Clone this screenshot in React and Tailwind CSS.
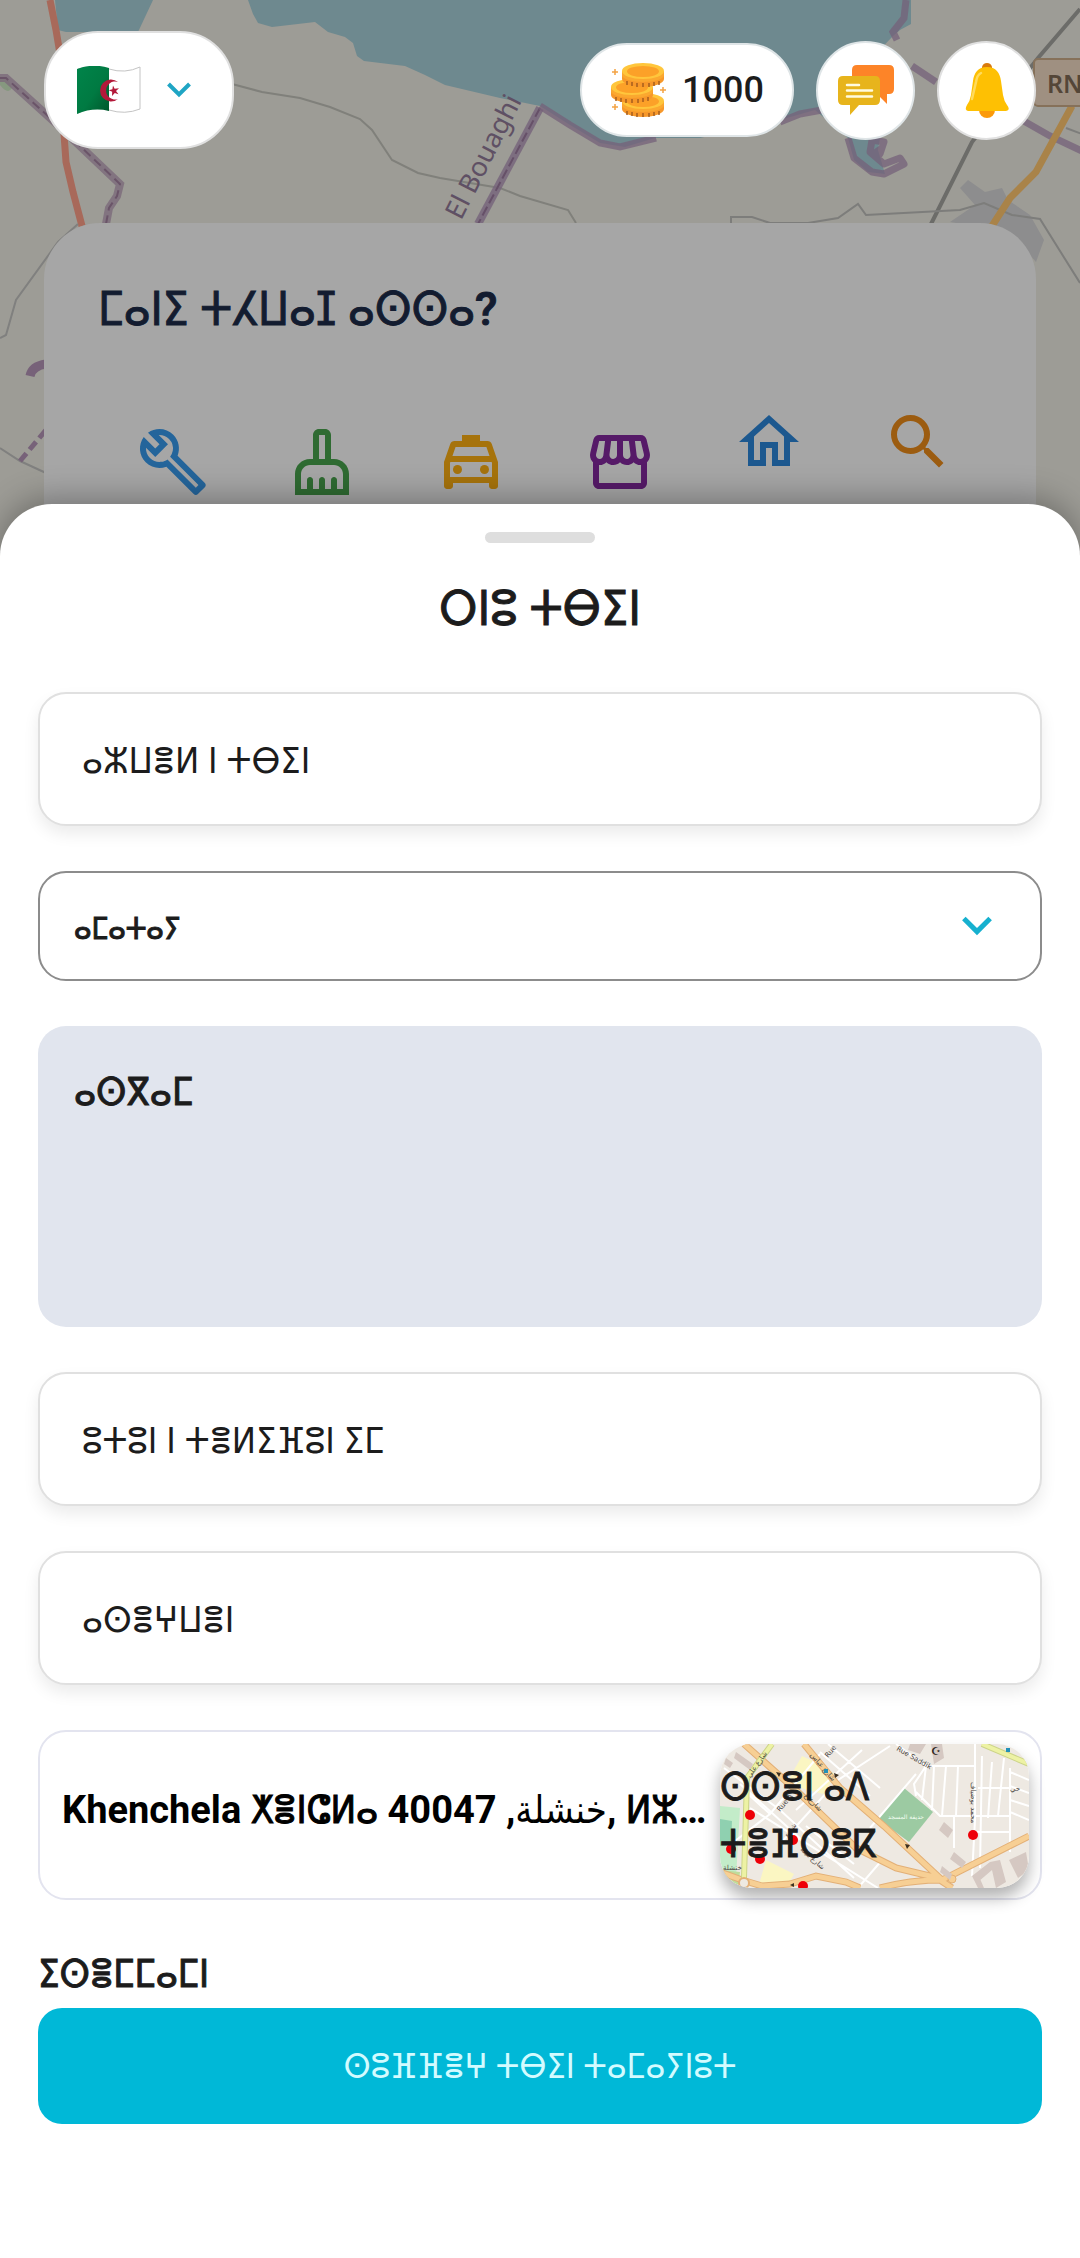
import React from "react";
import {
  MdOutlineBuild,
  MdOutlineCleaningServices,
  MdOutlineLocalTaxi,
  MdOutlineStorefront,
  MdOutlineHome,
  MdSearch,
} from "react-icons/md";

function BackgroundMap() {
  return (
    <svg
      className="absolute inset-0 h-full w-full"
      viewBox="0 0 1080 560"
      preserveAspectRatio="xMidYMin slice"
      fill="none"
      aria-hidden="true"
    >
      <rect width="1080" height="560" fill="#9d9c96" />
      <path d="M55 0H153L138 32H66L58 30Z" fill="#6e898f" />
      <path
        d="M248 0L253 14 258 23 272 27 315 22 328 32 345 37 353 43 357 56 364 61 405 66 425 75 445 85 500 98 540 106 570 125 600 143 625 147 655 138 700 138 780 120 815 110 848 138 854 160 868 172 885 174 878 150 880 138 870 60 893 36 900 30 911 24 911 0Z"
        fill="#6e898f"
      />
      <path d="M0 85Q8 95 12 88L8 79 0 78Z" fill="#86987f" />
      <path d="M50 0L56 30 61 60 63 120 66 162 73 192 82 226" stroke="#a8695a" strokeWidth="7" />
      <path d="M0 78H6L60 127 120 184 117 196 109 208 106 224" stroke="#7c6a7b" strokeWidth="8" opacity=".8" />
      <path d="M0 78H6L60 127 120 184 117 196 109 208 106 224" stroke="#6a5468" strokeWidth="2" strokeDasharray="9 5" />
      <path d="M232 84L262 92 300 98 330 107 360 119 372 130 392 160 418 173 440 178 500 188 520 196 568 210 576 223" stroke="#80807b" strokeWidth="2" />
      <path d="M540 108L478 224" stroke="#76637a" strokeWidth="8" opacity=".8" />
      <path d="M540 108L478 224" stroke="#665068" strokeWidth="2" strokeDasharray="10 4" />
      <text
        transform="translate(461 221) rotate(-63)"
        fontSize="27"
        fill="#5f5064"
        className="font-['Noto_Sans']"
      >
        El Bouaghi
      </text>
      <path d="M540 106L570 125 600 143 620 147 656 138M780 122L800 114 822 110M906 0L904 18 893 32 897 40M912 66L936 82M1022 120L1050 136 1082 151" stroke="#766179" strokeWidth="7" opacity=".75" />
      <path d="M848 138L854 158 872 172 884 174 904 164 900 158 884 164 870 152 872 140 884 142 880 154 876 148" stroke="#766179" strokeWidth="7" opacity=".75" strokeLinejoin="round" />
      <path d="M1080 9L1038 58 972 142 931 224" stroke="#6c6c69" strokeWidth="4" />
      <path d="M960 188L968 180 985 192 1002 188 1008 200 1030 215 1044 240 1036 262 1010 232 950 222 975 205Z" fill="#8d8d8e" />
      <path d="M731 224V217H752L770 223H808L838 218 858 204 866 215 960 210 984 203 1012 215 1040 219 1080 283" stroke="#7d7d7b" strokeWidth="2" />
      <path d="M1066 128L1082 134" stroke="#7d7d7b" strokeWidth="2" />
      <path d="M1072 106L1036 172 1010 198 992 226" stroke="#a98349" strokeWidth="7" />
      <rect x="1034" y="59" width="60" height="47" rx="4" fill="#9f9081" stroke="#86715a" strokeWidth="2" />
      <text x="1047" y="93" fontSize="25" fill="#544638" className="font-['Noto_Sans'] font-semibold">
        RN
      </text>
      <path d="M78 224L58 242 16 300 6 335 0 338M0 448L20 461 46 473" stroke="#80807f" strokeWidth="2" />
      <path d="M30 376Q32 366 46 364" stroke="#776279" strokeWidth="9" />
      <path d="M20 461L46 430" stroke="#776279" strokeWidth="5" strokeDasharray="10 5" />
    </svg>
  );
}

function FlagIcon() {
  return (
    <svg className="h-12 w-16" viewBox="0 0 64 48" aria-hidden="true">
      <defs>
        <linearGradient id="flagGreen" x1="0" y1="0" x2="1" y2="1">
          <stop offset="0" stopColor="#00844a" />
          <stop offset=".55" stopColor="#007a42" />
          <stop offset="1" stopColor="#00562b" />
        </linearGradient>
      </defs>
      <path d="M1 3Q16-2 32 3T63 1V43Q48 49 32 44T1 47Z" fill="#fff" stroke="#c4c4c4" />
      <path d="M0 3Q16-3 32 2V45Q16 41 0 48Z" fill="url(#flagGreen)" />
      <path d="M41 16A11 11 0 1 0 41 33 9 9 0 1 1 41 16Z" fill="#b3193a" />
      <path d="M36 19.500l1.600 3.200 4.400-.4-3 2.700 2.500 3.200-3.700-1.200-2.800 3 .2-4.200-3.500-1.600 3.700-.9Z" fill="#b3193a" />
    </svg>
  );
}

function ChevronIcon({ className }) {
  return (
    <svg className={className} viewBox="0 0 24 24" fill="none" aria-hidden="true">
      <path d="M1.500 6L12 16.500 22.500 6" stroke="currentColor" strokeWidth="4" />
    </svg>
  );
}

function Coin({ x, y }) {
  return (
    <g transform={`translate(${x} ${y})`}>
      <path d="M0 8V16C0 20 9 24 21 24S42 20 42 16V8Z" fill="#f7982a" />
      <path d="M5 18v4M10 19v4M15 20v4M21 20v4M27 20v4M32 19v4M37 18v4" stroke="#a75d1c" strokeWidth="1.500" />
      <path d="M0 8V12C0 16 9 19 21 19S42 16 42 12V8Z" fill="#fba82f" />
      <ellipse cx="21" cy="8" rx="21" ry="8" fill="#ffc63c" />
      <ellipse cx="21" cy="8.500" rx="16" ry="5.500" fill="#fca128" />
    </g>
  );
}

function CoinsIcon() {
  return (
    <svg className="h-14 w-14" viewBox="0 0 56 56" aria-hidden="true">
      <Coin x={12} y={31} />
      <Coin x={1} y={17} />
      <Coin x={12} y={1} />
      <path d="M5 7v6M2 10h6M53 25v6M50 28h6M5 42v6M2 45h6" stroke="#f4a343" strokeWidth="1.500" />
    </svg>
  );
}

function ChatIcon() {
  return (
    <svg className="h-14 w-14" viewBox="0 0 56 56" aria-hidden="true">
      <path d="M19 3H51Q56 3 56 8V27Q56 32 51 32H49V42L41 34 19 32Q14 32 14 27V8Q14 3 19 3Z" fill="#fd8428" />
      <path d="M5 14H37Q42 14 42 19V38Q42 43 37 43H21L12 53V43H5Q0 43 0 38V19Q0 14 5 14Z" fill="#e7b41c" />
      <path d="M9 23H21M9 28.500H34M9 34.500H34" stroke="#fffbe0" strokeWidth="2.500" strokeLinecap="round" />
    </svg>
  );
}

function BellIcon() {
  return (
    <svg className="h-14 w-12" viewBox="0 0 48 56" aria-hidden="true">
      <path d="M19 8V5Q20 1 24 1T29 5V8Z" fill="#d97b0c" />
      <circle cx="24" cy="48" r="8" fill="#fb9a0b" />
      <path d="M24 5C15 5 11 11 10 19L8 33Q7 39 4 43Q1 48 5 49H43Q48 48 44 43Q41 39 40 33L38 19C37 11 33 5 24 5Z" fill="#fec003" />
      <path d="M9 37L13 20Q14 13 18 11" stroke="#ffdb5c" strokeWidth="2.500" fill="none" strokeLinecap="round" />
    </svg>
  );
}

function StreetMap() {
  return (
    <svg
      className="absolute inset-0 h-full w-full"
      viewBox="0 0 309 144"
      preserveAspectRatio="xMidYMid slice"
      fill="none"
      aria-hidden="true"
    >
      <rect width="309" height="144" fill="#eee9e2" />
      <path d="M0 62L20 64 16 134H0Z" fill="#c3ecc9" />
      <path d="M0 75L12 77 11 102H0Z" fill="#8fd0b0" />
      <path d="M0 126L20 128 18 144H0Z" fill="#bfdc9a" />
      <path d="M82 12L104 22 116 31 103 50 66 40Z" fill="#fbf6c2" />
      <path d="M46 116L74 130 66 144H38Z" fill="#fbf6c2" />
      <path d="M184 44L213 68 189 98 158 75Z" fill="#9ccaa2" />
      <g stroke="#fff" strokeWidth="2">
        <path d="M4 24L60 66 134 134M28 50L50 70 100 10M50 70L6 104M60 100L118 36 170 2M76 66L142 6M100 8L150 52M108 0L160 44M20 40L84 98M30 64L158 144M86 82L134 120M138 144L162 116M150 84L196 30M176 0L206 22 194 40 196 52M206 22H256M206 22L202 56M214 22L212 66M226 22L222 72M238 22L236 72M255 0V76L252 132M196 48L220 72H290M234 72V104M262 12L260 124M272 18L268 74M258 44H290M252 88H290M290 24V108M290 28L309 36M290 42L309 49M290 56L309 62M290 68L309 76M284 14L278 72" />
      </g>
      <g stroke="#e3b077" strokeWidth="7">
        <path d="M24 0L78 48 136 104 176 124 218 134M84 0L120 44 164 82 222 136 309 92M0 128L22 136 42 142 70 140 96 132 126 138 140 144M160 144Q190 136 220 136L232 144" />
      </g>
      <g stroke="#f7cf94" strokeWidth="5">
        <path d="M24 0L78 48 136 104 176 124 218 134M84 0L120 44 164 82 222 136 309 92M0 128L22 136 42 142 70 140 96 132 126 138 140 144M160 144Q190 136 220 136L232 144" />
      </g>
      <path d="M52 0L27 34 24 134M262 0L309 20" stroke="#ccd488" strokeWidth="6" />
      <path d="M52 0L27 34 24 134M262 0L309 20" stroke="#edf2a4" strokeWidth="4" />
      <circle cx="24" cy="139" r="5" fill="#eee9e2" stroke="#e3b077" strokeWidth="2" />
      <circle cx="232" cy="135" r="4" fill="#f7cf94" stroke="#e3b077" />
      <g fill="#d5c8c2">
        <path d="M16 8L33 20 30 26 14 14ZM6 14L13 19 10 24 4 20ZM190 0H206L200 10 188 6ZM211 0H222L224 14 214 20ZM224 78L233 86 228 94 219 86ZM234 108L246 118 242 124 230 115ZM222 122L232 130 230 136 220 128ZM252 132L270 118 280 116 286 138 276 144 272 126 258 138ZM289 116L306 108 309 126 298 134ZM252 132L258 130 264 144H258Z" />
      </g>
      <g fill="#4a4541" fontSize="7" className="font-['DejaVu_Sans']">
        <text transform="translate(30 34) rotate(-55)">شارع علي</text>
        <text transform="translate(90 11) rotate(50)">شارع عباس</text>
        <text transform="translate(60 68) rotate(-50)">Rue A</text>
        <text transform="translate(108 14) rotate(-50)">Rue</text>
        <text transform="translate(84 52) rotate(46)">شارع ع</text>
        <text transform="translate(68 94) rotate(-55)">شارع</text>
        <text transform="translate(80 106) rotate(42)">شارع ميلة</text>
        <text transform="translate(176 6) rotate(30)">Rue Saddik</text>
        <text transform="translate(251 38) rotate(90)">محمد بوضياف</text>
        <text x="290" y="47">حي</text>
        <text x="3" y="126">خنشلة</text>
      </g>
      <text x="168" y="75" fontSize="6" fill="#f4fff4" className="font-['DejaVu_Sans']">
        حديقة المسجد
      </text>
      <text x="211" y="11" fontSize="11" fill="#2c2620" className="font-['DejaVu_Sans']">
        ☪
      </text>
      <path d="M104 25h4v4h-4zM286 4h4v4h-4z" fill="#2391b8" />
      <path d="M56 28l5 1-2 4zM114 29l5 2-4 3zM146 100l4 2-4 3zM185 100l5 1-3 4zM70 141l4-2v4z" fill="#3c3020" />
      <g fill="#ee0008">
        <circle cx="30" cy="71" r="5" />
        <circle cx="11" cy="105" r="5" />
        <circle cx="40" cy="115" r="5" />
        <circle cx="73" cy="96" r="5" />
        <circle cx="83" cy="142" r="5" />
        <circle cx="253" cy="91" r="5" />
      </g>
    </svg>
  );
}

const categories = [
  { name: "Repairs", Icon: MdOutlineBuild, color: "text-[#24659b]", lift: false },
  { name: "Cleaning", Icon: MdOutlineCleaningServices, color: "text-[#2f6b32]", lift: false },
  { name: "Taxi", Icon: MdOutlineLocalTaxi, color: "text-[#a6730c]", lift: false },
  { name: "Shops", Icon: MdOutlineStorefront, color: "text-[#561a68]", lift: false },
  { name: "Housing", Icon: MdOutlineHome, color: "text-[#1c588f]", lift: true },
  { name: "Search", Icon: MdSearch, color: "text-[#9c5c10]", lift: true },
];

function TextField({ label }) {
  return (
    <input
      type="text"
      aria-label={label}
      placeholder={label}
      className="h-[134px] w-full rounded-[28px] border-2 border-[#e0e0e0] bg-white px-[42px] pt-1 text-[36px] text-[#1c1c1c] shadow-[0_8px_16px_rgba(0,0,0,0.08)] outline-none placeholder:text-[#1c1c1c]"
    />
  );
}

export default function App() {
  return (
    <div className="relative flex min-h-screen flex-col bg-white font-['Roboto','DejaVu_Sans_Condensed','DejaVu_Sans',sans-serif] text-[#1c1c1c]">
      <section className="relative overflow-hidden">
        <BackgroundMap />
        <div className="relative px-11 pt-[31px]">
          <header className="flex h-[118px] items-center justify-between">
            <button
              type="button"
              aria-label="Language"
              className="flex h-[118px] w-[190px] items-center gap-[26px] rounded-[54px] border-2 border-[#e0e0e0] bg-white pl-[31px]"
            >
              <FlagIcon />
              <ChevronIcon className="size-6 text-[#1fa5c4]" />
            </button>
            <div className="flex items-center gap-[22px]">
              <button
                type="button"
                className="flex h-[94px] w-[214px] items-center justify-center gap-4 rounded-full border-2 border-[#dfe5e7] bg-white text-[36px] font-medium"
              >
                <CoinsIcon />
                1000
              </button>
              <button
                type="button"
                aria-label="Messages"
                className="flex size-[99px] items-center justify-center rounded-full border-2 border-[#dfe5e7] bg-white"
              >
                <ChatIcon />
              </button>
              <button
                type="button"
                aria-label="Notifications"
                className="flex size-[99px] items-center justify-center rounded-full border-2 border-[#e0e0e0] bg-white"
              >
                <BellIcon />
              </button>
            </div>
          </header>
          <div className="mt-[74px] rounded-t-[56px] bg-[#a6a6a6] pt-14 pr-11 pb-[60px] pl-[54px]">
            <h1 className="text-[46px] leading-[60px] font-medium text-[#131c30] [-webkit-text-stroke:1px_currentColor]">
              ⵎⴰⵏⵉ ⵜⵃⵡⴰⵊ ⴰⵙⵙⴰ?
            </h1>
            <nav className="mt-[67px] grid h-[92px] grid-cols-6 justify-items-center">
              {categories.map(({ name, Icon, color, lift }) => (
                <button
                  key={name}
                  type="button"
                  aria-label={name}
                  className={lift ? "self-start" : "self-end"}
                >
                  <Icon className={`size-[72px] ${color}`} />
                </button>
              ))}
            </nav>
          </div>
        </div>
      </section>

      <main className="relative -mt-[54px] flex grow flex-col rounded-t-[52px] bg-white px-[38px] pt-7 shadow-[0_-6px_32px_rgba(0,0,0,0.3)]">
        <div className="mx-auto h-[11px] w-[110px] rounded-full bg-[#dedede]" />
        <h2 className="mt-9 text-center text-[48px] leading-[60px] font-medium [-webkit-text-stroke:1px_currentColor]">
          ⵔⵏⵓ ⵜⴱⵉⵏ
        </h2>
        <form className="mt-[53px] flex flex-col" onSubmit={(e) => e.preventDefault()}>
          <div className="flex flex-col gap-[45px]">
            <TextField label="ⴰⵣⵡⴻⵍ ⵏ ⵜⴱⵉⵏ" />
            <div className="relative">
              <select
                aria-label="ⴰⵎⴰⵜⴰⵢ"
                className="block h-[110px] w-full appearance-none rounded-[28px] border-2 border-[#8c8c8c] bg-white px-[34px] pt-1 text-[30px] font-medium outline-none [-webkit-text-stroke:1px_currentColor]"
              >
                <option>ⴰⵎⴰⵜⴰⵢ</option>
              </select>
              <ChevronIcon className="pointer-events-none absolute top-10 right-[50px] size-[30px] text-[#16b0cf]" />
            </div>
            <textarea
              aria-label="ⴰⵙⴳⴰⵎ"
              placeholder="ⴰⵙⴳⴰⵎ"
              className="block h-[301px] w-full resize-none rounded-[28px] bg-[#e1e5ee] px-9 pt-[38px] text-[38px] font-medium outline-none [-webkit-text-stroke:1px_currentColor] placeholder:text-[#1c1c1c]"
            />
            <TextField label="ⵓⵜⵓⵏ ⵏ ⵜⴻⵍⵉⴼⵓⵏ ⵉⵎ" />
            <TextField label="ⴰⵙⴻⵖⵡⴻⵏ" />
            <div className="flex h-[170px] items-start rounded-[28px] border-2 border-[#e3e4ef] pt-3 pr-[11px] pl-[22px]">
              <p className="mt-9 min-w-0 grow text-[38px] leading-[60px] font-bold whitespace-nowrap text-black">
                Khenchela <span className="font-normal [-webkit-text-stroke:1px_currentColor]">ⵅⴻⵏⵛⵍⴰ</span>{" "}
                <span className="font-normal">خنشلة</span>, 40047,{" "}
                <span className="font-normal [-webkit-text-stroke:1px_currentColor]">ⵍⵣ</span>…
              </p>
              <button
                type="button"
                className="relative h-[144px] w-[309px] shrink-0 overflow-hidden rounded-[32px] text-left text-[38px] leading-[57px] font-medium shadow-[0_10px_16px_rgba(0,0,0,0.3)]"
              >
                <StreetMap />
                <span className="relative block w-48 [-webkit-text-stroke:1px_currentColor]">
                  ⵙⵙⴻⵏ ⴰⴷ
                  <br />
                  ⵜⴻⴼⵔⴻⴽ
                </span>
              </button>
            </div>
          </div>
          <h3 className="mt-11 text-[38px] leading-[60px] font-medium [-webkit-text-stroke:1px_currentColor]">
            ⵉⵙⴻⵎⵎⴰⵎⵏ
          </h3>
          <button
            type="submit"
            className="mt-1 h-[116px] rounded-3xl bg-[#00b8d7] text-[34px] text-[#d2fbff]"
          >
            ⵙⵓⴼⴼⴻⵖ ⵜⴱⵉⵏ ⵜⴰⵎⴰⵢⵏⵓⵜ
          </button>
        </form>
      </main>
    </div>
  );
}
